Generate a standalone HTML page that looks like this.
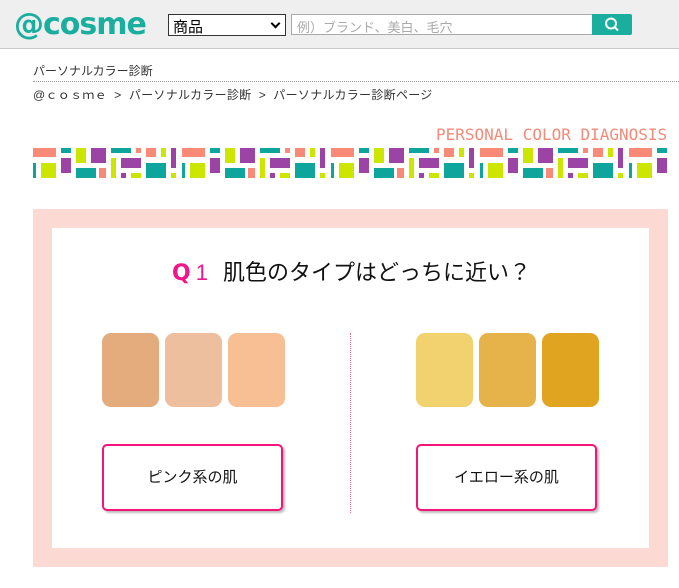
<!DOCTYPE html>
<html><head><meta charset="utf-8"><style>
*{margin:0;padding:0;box-sizing:border-box}
body{width:679px;height:588px;background:#fff;font-family:"Liberation Sans","Noto Sans CJK JP",sans-serif;position:relative;overflow:hidden;color:#333}
.hdr{position:absolute;left:0;top:0;width:679px;height:49px;background:#efefef;border-bottom:1px solid #ccc}
.logo{position:absolute;left:14px;top:7px;font-size:30px;color:#1aae9f;font-family:"DejaVu Sans",sans-serif;letter-spacing:-1px;font-weight:bold}
.sel{position:absolute;left:168px;top:14px;width:118px;height:22px;border:1px solid #333;background:#fff;font-size:15px;padding:1px 4px;color:#000}
.sel:after{content:"";position:absolute;right:6px;top:5px;width:5px;height:5px;border-right:2px solid #000;border-bottom:2px solid #000;transform:rotate(45deg)}
.inp{position:absolute;left:291px;top:14px;width:302px;height:21px;border:1px solid #aaa;background:#fff;font-size:13px;color:#aaa;padding:2px 5px}
.btn{position:absolute;left:592px;top:14px;width:40px;height:21px;background:#1aae9f;border-radius:0 2px 2px 0}
.t1{position:absolute;left:33px;top:62px;font-size:12px;color:#333}
.dl{position:absolute;left:33px;top:81px;width:646px;border-top:1px dotted #999}
.t2{position:absolute;left:33px;top:86px;font-size:12px;color:#333;letter-spacing:0.3px}
.pcd{position:absolute;left:436px;top:125px;font-family:"DejaVu Sans Mono","Liberation Mono",monospace;font-size:16px;color:#f48a78;letter-spacing:0}
.outer{position:absolute;left:33px;top:209px;width:635px;height:358px;background:#fdd9d3}
.inner{position:absolute;left:52px;top:228px;width:597px;height:320px;background:#fff}
.q{position:absolute;left:172px;top:255px;font-size:22px;color:#111}
.q b{color:#f0168a;font-family:"DejaVu Sans",sans-serif;font-weight:bold;margin-right:5px}
.q i{font-style:normal;color:#f0168a;margin-right:15px}
.sw{position:absolute;top:333px;width:57px;height:74px;border-radius:9px}
.ch{position:absolute;top:444px;width:181px;height:67px;border:2px solid #f5147a;border-radius:5px;box-shadow:2px 2px 2px #bbb;font-size:15px;color:#111;text-align:center;line-height:63px;background:#fff}
.vl{position:absolute;left:350px;top:333px;height:180px;border-left:1px dotted #f06a9a}
</style></head><body>
<div class="hdr">
<div class="logo">@cosme</div>
<div class="sel">商品</div>
<div class="inp">例）ブランド、美白、毛穴</div>
<div class="btn"><svg width="40" height="21"><circle cx="19" cy="9.5" r="5" fill="none" stroke="#fff" stroke-width="2"/><line x1="22.5" y1="13" x2="26" y2="16.5" stroke="#fff" stroke-width="2"/></svg></div>
</div>
<div class="t1">パーソナルカラー診断</div>
<div class="dl"></div>
<div class="t2">@ｃｏｓｍｅ &nbsp;&gt;&nbsp; パーソナルカラー診断 &nbsp;&gt;&nbsp; パーソナルカラー診断ページ</div>
<div class="pcd">PERSONAL COLOR DIAGNOSIS</div>
<svg style="position:absolute;left:33px;top:148px" width="636" height="31">
<defs><pattern id="p" x="0" y="0" width="149" height="31" patternUnits="userSpaceOnUse">
<rect x="0" y="0" width="23" height="9" fill="#fa8a78"/>
<rect x="28" y="0" width="10" height="5" fill="#0ea69c"/>
<rect x="43" y="0" width="10" height="15" fill="#cde600"/>
<rect x="58" y="0" width="15" height="15" fill="#9b44a6"/>
<rect x="78" y="0" width="20" height="5" fill="#0ea69c"/>
<rect x="103" y="0" width="5" height="5" fill="#fa8a78"/>
<rect x="113" y="0" width="10" height="9" fill="#fa8a78"/>
<rect x="128" y="0" width="5" height="9" fill="#cde600"/>
<rect x="138" y="0" width="5" height="20" fill="#9b44a6"/>
<rect x="0" y="15" width="3" height="15" fill="#0ea69c"/>
<rect x="8" y="15" width="15" height="15" fill="#cde600"/>
<rect x="28" y="10" width="10" height="15" fill="#9b44a6"/>
<rect x="43" y="20" width="20" height="10" fill="#0ea69c"/>
<rect x="66" y="20" width="7" height="10" fill="#fa8a78"/>
<rect x="78" y="10" width="5" height="20" fill="#cde600"/>
<rect x="88" y="10" width="20" height="10" fill="#9b44a6"/>
<rect x="88" y="25" width="5" height="5" fill="#9b44a6"/>
<rect x="98" y="25" width="10" height="5" fill="#cde600"/>
<rect x="113" y="15" width="20" height="15" fill="#0ea69c"/>
<rect x="138" y="25" width="5" height="5" fill="#cde600"/>
</pattern></defs>
<rect width="636" height="31" fill="url(#p)"/>
</svg>
<div class="outer"></div>
<div class="inner"></div>
<div class="q"><b>Q</b><i>1</i>肌色のタイプはどっちに近い？</div>
<div class="sw" style="left:102px;background:#e4ac7c"></div>
<div class="sw" style="left:165px;background:#eebf9f"></div>
<div class="sw" style="left:228px;background:#f7bf93"></div>
<div class="sw" style="left:416px;background:#f2d16f"></div>
<div class="sw" style="left:479px;background:#e5b34a"></div>
<div class="sw" style="left:542px;background:#e0a421"></div>
<div class="vl"></div>
<div class="ch" style="left:102px">ピンク系の肌</div>
<div class="ch" style="left:416px">イエロー系の肌</div>
</body></html>
